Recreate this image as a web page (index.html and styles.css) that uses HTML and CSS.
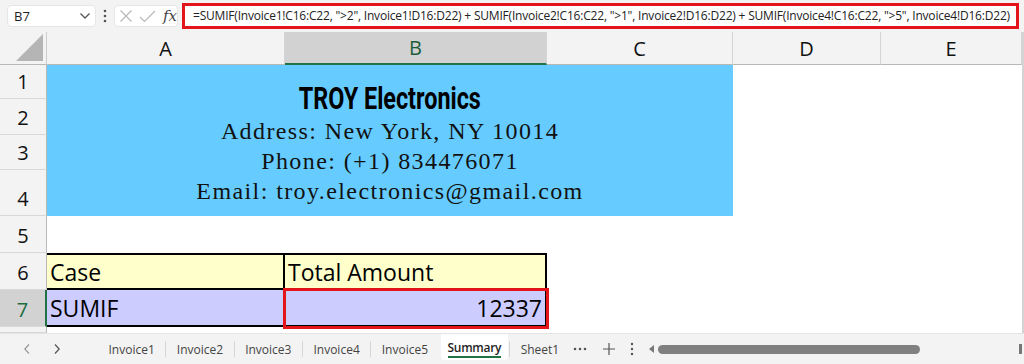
FILE: index.html
```html
<!DOCTYPE html>
<html lang="en">

<head>
    <meta charset="utf-8">
    <title>Summary - SUMIF across sheets</title>
    <meta name="viewport" content="width=device-width, initial-scale=1">
    <link rel="stylesheet" href="styles.css">
</head>

<body>

    <!-- Formula bar -->
    <header class="formula-bar">
        <div class="name-box">
            <span>B7</span>
            <svg width="12" height="8" viewBox="0 0 12 8"><path d="M1.5 1.5l4.5 4.5 4.5-4.5" fill="none" stroke="#555" stroke-width="1.3"/></svg>
        </div>
        <svg class="grip" width="4" height="14" viewBox="0 0 4 14"><circle cx="2" cy="2" r="1.3"/><circle cx="2" cy="7" r="1.3"/><circle cx="2" cy="12" r="1.3"/></svg>
        <div class="fx-box">
            <svg width="14" height="14" viewBox="0 0 14 14"><path d="M1.5 1.5l11 11M12.5 1.5l-11 11" stroke="#b8b8b8" stroke-width="1.2"/></svg>
            <svg width="17" height="14" viewBox="0 0 17 14"><path d="M1 8l4.5 4.5L16 2" fill="none" stroke="#b8b8b8" stroke-width="1.2"/></svg>
            <span class="fx">fx</span>
        </div>
        <div class="formula">=SUMIF(Invoice1!C16:C22, "&gt;2", Invoice1!D16:D22) + SUMIF(Invoice2!C16:C22, "&gt;1", Invoice2!D16:D22) + SUMIF(Invoice4!C16:C22, "&gt;5", Invoice4!D16:D22)</div>
    </header>

    <!-- Grid of cells, gridlines switched off -->
    <main class="sheet">
        <div class="corner"><span class="corner-mark"></span></div>
        <div class="col-head">A</div>
        <div class="col-head selected">B</div>
        <div class="col-head">C</div>
        <div class="col-head">D</div>
        <div class="col-head">E</div>

        <div class="row-head">1</div>
        <div class="letterhead">
            <p class="company">TROY Electronics</p>
            <p class="contact">Address: New York, NY 10014</p>
            <p class="contact">Phone: (+1) 834476071</p>
            <p class="contact">Email: troy.electronics@gmail.com</p>
        </div>
        <div class="cell"></div>
        <div class="cell"></div>

        <div class="row-head">2</div>
        <div class="cell"></div>
        <div class="cell"></div>

        <div class="row-head">3</div>
        <div class="cell"></div>
        <div class="cell"></div>

        <div class="row-head">4</div>
        <div class="cell"></div>
        <div class="cell"></div>

        <div class="row-head">5</div>
        <div class="cell"></div>
        <div class="cell"></div>
        <div class="cell"></div>
        <div class="cell"></div>
        <div class="cell"></div>

        <div class="row-head">6</div>
        <div class="cell table-head first">Case</div>
        <div class="cell table-head">Total Amount</div>
        <div class="cell"></div>
        <div class="cell"></div>
        <div class="cell"></div>

        <div class="row-head active">7</div>
        <div class="cell table-row first">SUMIF</div>
        <div class="cell table-row number current">12337</div>
        <div class="cell"></div>
        <div class="cell"></div>
        <div class="cell"></div>

        <div class="row-head"></div>
        <div class="cell"></div>
        <div class="cell"></div>
        <div class="cell"></div>
        <div class="cell"></div>
        <div class="cell"></div>
    </main>

    <!-- Sheet tabs -->
    <footer class="tabs">
        <div class="tab-nav">
            <svg width="8" height="12" viewBox="0 0 8 12"><path d="M6 1.5L1.8 6 6 10.5" fill="none" stroke="#9a9a9a" stroke-width="1.2"/></svg>
            <svg width="8" height="12" viewBox="0 0 8 12"><path d="M2 1.5L6.2 6 2 10.5" fill="none" stroke="#555" stroke-width="1.2"/></svg>
        </div>
        <span class="tab">Invoice1</span>
        <i class="tab-sep"></i>
        <span class="tab">Invoice2</span>
        <i class="tab-sep"></i>
        <span class="tab">Invoice3</span>
        <i class="tab-sep"></i>
        <span class="tab">Invoice4</span>
        <i class="tab-sep"></i>
        <span class="tab">Invoice5</span>
        <span class="tab active"><span>Summary</span></span>
        <i class="tab-sep"></i>
        <span class="tab">Sheet1</span>
        <svg class="more" width="14" height="4" viewBox="0 0 14 4"><circle cx="2" cy="2" r="1.3"/><circle cx="7" cy="2" r="1.3"/><circle cx="12" cy="2" r="1.3"/></svg>
        <svg class="add" width="14" height="14" viewBox="0 0 14 14"><path d="M7 1v12M1 7h12" stroke="#555" stroke-width="1.2"/></svg>
        <svg class="grip" width="4" height="14" viewBox="0 0 4 14"><circle cx="2" cy="2" r="1.2"/><circle cx="2" cy="7" r="1.2"/><circle cx="2" cy="12" r="1.2"/></svg>
        <div class="scrollbar">
            <svg width="6" height="8" viewBox="0 0 6 8"><path d="M5 0v8L0 4z" fill="#777"/></svg>
            <span class="thumb"></span>
            <span class="track-end"></span>
        </div>
    </footer>

</body>

</html>
```

FILE: styles.css
```css
* {
    margin: 0;
    padding: 0;
    box-sizing: border-box;
}

body {
    width: 1024px;
    height: 364px;
    overflow: hidden;
    font-family: "Open Sans", sans-serif;
    background-color: #ffffff;
    color: #1f1f1f;
}

/** Formula bar **/
.formula-bar {
    display: flex;
    align-items: center;
    height: 32px;
    padding-left: 7px;
    background-color: #f3f3f3;
}

.name-box {
    display: flex;
    align-items: center;
    justify-content: space-between;
    width: 89px;
    height: 22px;
    padding: 0 4px 0 6px;
    background-color: #fff;
    border: 1px solid #e6e6e6;
    border-radius: 4px;
    font-size: 13px;
}

.grip {
    fill: #555;
}

.formula-bar .grip {
    margin: 0 7px;
}

.fx-box {
    display: flex;
    align-items: center;
    gap: 6px;
    width: 64px;
    height: 22px;
    padding-left: 4px;
    background-color: #fff;
    border: 1px solid #e6e6e6;
    border-radius: 4px;
}

.fx {
    font-family: "DejaVu Serif", serif;
    font-style: italic;
    font-size: 15px;
    color: #444;
    margin-left: 1px;
}

.formula {
    flex: 1;
    height: 26px;
    margin: 0 5px 0 4px;
    padding-left: 8px;
    border: 3px solid #e3151b;
    background-color: #fff;
    font-size: 12px;
    letter-spacing: -0.2px;
    line-height: 20px;
    white-space: nowrap;
    overflow: hidden;
    color: #222;
}

/** Sheet grid **/
.sheet {
    display: grid;
    grid-template-columns: 47px 238px 262px 186px 148px 1fr;
    grid-template-rows: 33px 34px 36px 35px 46px 37px 37px 37px 6px;
    border-right: 2px solid #d4d4d4;
}

.corner,
.col-head {
    background-color: #f3f3f3;
    border-bottom: 1px solid #b8b8b8;
}

.corner {
    display: flex;
    align-items: flex-end;
    justify-content: flex-end;
    padding: 0 3px 3px 0;
    border-right: 1px solid #cdcdcd;
}

.corner-mark {
    width: 27px;
    height: 27px;
    background-color: #b5b5b5;
    clip-path: polygon(100% 0, 100% 100%, 0 100%);
}

.col-head {
    display: flex;
    align-items: center;
    justify-content: center;
    border-right: 1px solid #d4d4d4;
    font-size: 20px;
    color: #111;
}

.col-head.selected {
    background-color: #d2d2d2;
    border-bottom: 2px solid #217346;
    color: #1d5e3a;
}

.row-head {
    display: flex;
    align-items: flex-end;
    justify-content: center;
    background-color: #f3f3f3;
    border-right: 1px solid #b8b8b8;
    border-bottom: 1px solid #d8d8d8;
    font-size: 20px;
    line-height: 32px;
    color: #111;
}

.row-head.active {
    background-color: #d2d2d2;
    border-right: 2px solid #217346;
    color: #1d6b3f;
}

/** Merged A1:C4 **/
.letterhead {
    grid-column: 2 / 5;
    grid-row: 2 / 6;
    display: flex;
    flex-direction: column;
    align-items: center;
    justify-content: center;
    padding-top: 5px;
    background-color: #66ccff;
    color: #111;
}

.company {
    font-family: Roboto, sans-serif;
    font-weight: 700;
    font-size: 32px;
    line-height: 36px;
    transform: scaleX(0.73);
    color: #000;
}

.contact {
    font-family: "Liberation Serif", serif;
    font-size: 24px;
    letter-spacing: 1.4px;
    line-height: 30px;
}

/** Table A6:B7 **/
.cell {
    display: flex;
    align-items: center;
    font-size: 23px;
    color: #000;
}

.table-head {
    background-color: #ffffcc;
    border-top: 2px solid #000;
    border-right: 2px solid #000;
    border-bottom: 2px solid #000;
    padding-left: 3px;
}

.table-row {
    background-color: #ccccff;
    border-right: 2px solid #000;
    border-bottom: 2px solid #000;
    padding-left: 3px;
}

.number {
    justify-content: flex-end;
    padding-right: 3px;
}

.current {
    position: relative;
    z-index: 1;
    outline: 3px solid #e3151b;
    outline-offset: -1px;
}

/** Sheet tabs **/
.tabs {
    display: flex;
    align-items: center;
    height: 31px;
    background-color: #f3f3f3;
    border-top: 1px solid #e4e4e4;
    font-size: 12px;
    color: #444;
}

.tab-nav {
    display: flex;
    align-items: center;
    gap: 22px;
    width: 98px;
    padding-left: 23px;
}

.tab {
    display: flex;
    align-items: center;
    align-self: stretch;
    padding: 0 10.5px;
}

.tab-sep {
    width: 1px;
    height: 16px;
    background-color: #d6d6d6;
}

.tab.active {
    margin: 0 1px 4px 2px;
    padding: 0 7px;
    background-color: #fff;
    border-radius: 0 0 4px 4px;
    font-weight: 600;
    letter-spacing: -0.3px;
    color: #1f1f1f;
}

.tab.active span {
    padding-top: 2px;
    border-bottom: 2px solid #217346;
    line-height: 17px;
}

.tabs .more {
    fill: #555;
    margin-left: 3px;
}

.tabs .add {
    margin-left: 15px;
}

.tabs .grip {
    margin-left: 14px;
}

.scrollbar {
    flex: 1;
    display: flex;
    align-items: center;
    gap: 3px;
    margin-left: 15px;
}

.thumb {
    width: 262px;
    height: 9px;
    background-color: #808080;
    border-radius: 5px;
}

.track-end {
    width: 3px;
    height: 10px;
    margin-left: auto;
    margin-right: 2px;
    background-color: #777;
}
```
